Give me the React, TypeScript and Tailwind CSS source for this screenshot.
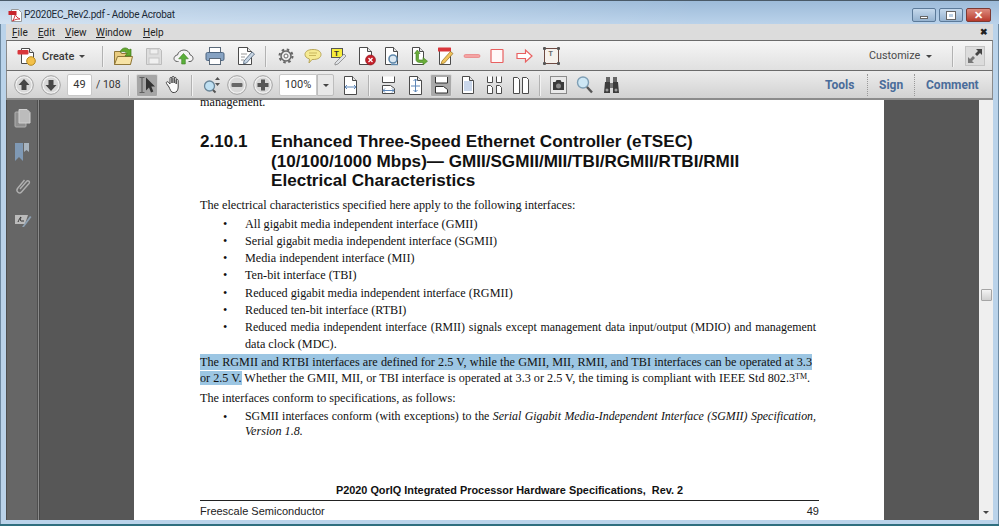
import React from "react";

const INK = "#4b4b4b";
const S = ({ w, h = 20, children }: { w: number; h?: number; children: React.ReactNode }) => (
  <svg width={w} height={h} viewBox={`0 0 ${w} ${h}`} className="shrink-0 block" fill="none">{children}</svg>
);
const Sep = () => <div className="w-[2px] h-[21px] bg-[#b2b2b2] border-r border-[#f2f2f2] shrink-0" />;
const Caret = ({ className = "" }: { className?: string }) => (
  <svg width="6" height="3" className={`shrink-0 ${className}`}><path d="M0 0h6L3 3z" fill="#444" /></svg>
);

const CircleBtn = ({ kind }: { kind: "up" | "down" | "minus" | "plus" }) => (
  <S w={20}>
    <circle cx="10" cy="10" r="9.300" fill="#f0f0f0" stroke="#a0a0a0" />
    <circle cx="10" cy="10" r="7.500" fill="#d8d8d8" />
    {kind === "up" && <path d="M10 4l5.500 6H12.500v5h-5v-5H4.500z" fill="#474747" />}
    {kind === "down" && <path d="M10 16l5.500-6H12.500V5h-5v5H4.500z" fill="#474747" />}
    {kind === "minus" && <rect x="4.500" y="8" width="11" height="4" rx="1" fill="#666" />}
    {kind === "plus" && <path d="M8 4.500h4V8h3.500v4H12v3.500H8V12H4.500V8H8z" fill="#555" />}
  </S>
);

const Bullet = ({ children, h = 17, className = "" }: { children: React.ReactNode; h?: number; className?: string }) => (
  <div className={`flex ${className}`} style={{ height: h }}>
    <div className="w-[45px] shrink-0 pl-[23px]">•</div>
    <div className="flex-1 min-w-0 pr-[3px]">{children}</div>
  </div>
);

const Page = ({ w = 15 }: { w?: number }) => (
  <>
    <path d={`M1.500 1.500h${w - 7}l4 4v${14}h-${w - 3}z`} fill="#fff" stroke={INK} />
    <path d={`M${w - 5.500} 1.500v4h4`} fill="#e4e4e4" stroke={INK} />
  </>
);

const Blue = "#5c86b8";

export default function App() {
  return (
    <div className="w-[999px] h-[526px] overflow-hidden relative bg-[#bad3ea] shadow-[inset_1px_0_0_#6f8ba3,inset_-1px_0_0_#6f8ba3] flex flex-col font-['Liberation_Sans',sans-serif] text-black">
      {/* title bar */}
      <div className="h-[24px] shrink-0 flex items-center pt-[5px] border-t border-[#4a5a68] bg-[linear-gradient(90deg,rgba(255,255,255,0.35),rgba(255,255,255,0)_70%),linear-gradient(180deg,#9dbbd9,#bad2ea)] pl-[8px] pr-[8px]">
        <svg width="15" height="15" viewBox="0 0 15 15" className="shrink-0">
          <path d="M3.500 1.500h7l3 3v9h-10z" fill="#fff" stroke="#999" />
          <rect x="0.500" y="3" width="8" height="4" fill="#c8252c" />
          <path d="M4.500 13c2-3 2.500-5 2.500-7 1 2.500 2.500 4 5 5-3 0-5 .5-7.500 2z" fill="none" stroke="#c8252c" strokeWidth=".9" />
        </svg>
        <span className="ml-[1px] text-[10px] tracking-[-0.25px] leading-none font-['Roboto',sans-serif] text-[#1c2a36]">P2020EC_Rev2.pdf - Adobe Acrobat</span>
        <div className="flex-1" />
        <div className="flex gap-[3px]">
          <div className="w-[24px] h-[14px] rounded-[2px] border border-[#5c7a99] bg-gradient-to-b from-[#c6d9ec] to-[#96b3d0] flex items-end justify-center pb-[2px]">
            <div className="w-[8px] h-[3px] bg-white border border-[#666]" />
          </div>
          <div className="w-[24px] h-[14px] rounded-[2px] border border-[#5c7a99] bg-gradient-to-b from-[#c6d9ec] to-[#96b3d0] flex items-center justify-center">
            <div className="w-[8px] h-[7px] bg-[#bcd0e4] border-2 border-white outline outline-1 outline-[#666]" />
          </div>
          <div className="w-[25px] h-[14px] rounded-[2px] border border-[#7d3a33] bg-gradient-to-b from-[#dc8a7e] to-[#b8392c] flex items-center justify-center text-white text-[11px] font-bold leading-none">✕</div>
        </div>
      </div>
      {/* menu bar */}
      <div className="h-[16px] mx-[6px] shrink-0 bg-[#dcdcdc] flex items-center font-['Roboto',sans-serif] text-[10px] text-[#222] pl-[6px] relative">
        <span className="w-[26px]"><u>F</u>ile</span>
        <span className="w-[27px]"><u>E</u>dit</span>
        <span className="w-[31px]"><u>V</u>iew</span>
        <span className="w-[47px]"><u>W</u>indow</span>
        <span><u>H</u>elp</span>
        <span className="absolute right-[5px] top-[1px] text-[9px] font-bold leading-[14px]">✖</span>
      </div>
      {/* toolbar 1 */}
      <div className="h-[30px] mx-[6px] shrink-0 border-t border-t-[#6b6b6b] border-x border-x-[#8b8b8b] bg-gradient-to-b from-[#f6f6f6] to-[#e0e0e0] flex items-center pl-[10px] pt-[1px]">
        <S w={20}>
          <path d="M4.500 2.500h8l4 4v11h-12z" fill="#fff" stroke={INK} />
          <path d="M12.500 2.500v4h4" fill="#e8e8e8" stroke={INK} />
          <rect x="0.500" y="4" width="11" height="4.500" rx="1" fill="#d9363b" />
          <circle cx="14" cy="15" r="4.300" fill="#f3c04a" stroke="#b5891f" />
        </S>
        <span className="ml-[5px] w-[31px] text-[11px] font-['Roboto',sans-serif] font-medium text-[#3a3a3a] leading-none whitespace-nowrap">Create</span>
        <Caret className="ml-[6px]" />
        <div className="ml-[17px]"><Sep /></div>
        <div className="ml-[9px]">
          <S w={21} h={22}>
            <path d="M1.500 6.500h6l1 2h9v11h-16z" fill="#e9cc80" stroke="#8f7638" />
            <path d="M1.500 19.500l3-8h15l-2 8z" fill="#f7e3a5" stroke="#8f7638" />
            <path d="M7 7c2-5 7-5 9-2l2-1v7h-6l2-2.500c-1-2-4-2.500-7-1.500z" fill="#63a82d" stroke="#3d7a17" strokeWidth=".7" />
          </S>
        </div>
        <div className="ml-[11px]">
          <S w={18}>
            <path d="M1.500 2.500h13l2 2v14h-15z" fill="#dedede" stroke="#bcbcbc" />
            <rect x="5" y="3" width="8" height="5" fill="#efefef" stroke="#c6c6c6" />
            <rect x="4" y="12" width="10" height="6" fill="#f0f0f0" stroke="#c6c6c6" />
          </S>
        </div>
        <div className="ml-[10px]">
          <S w={21}>
            <path d="M5.500 15.500h-1C2 15.500 1 14 1 12.500S2.500 9 4.500 9C5 6 8 4 11 4s5.500 2 6 4.800c1.800.3 3 2 3 3.700s-1.500 3-3 3h-1.500" fill="#f4f4f4" stroke="#5c5c5c" />
            <path d="M10.500 7.500l4.800 5.300h-3V18H8.700v-5.200h-3z" fill="#5aaf3a" stroke="#3c7d22" strokeWidth=".6" />
          </S>
        </div>
        <div className="ml-[11px]">
          <S w={20}>
            <rect x="4.500" y="1.500" width="11" height="5" fill="#fff" stroke="#5b6a7a" />
            <rect x="1" y="6.500" width="18" height="8" rx="1.500" fill="#86a2c2" stroke="#4d6580" />
            <rect x="4.500" y="12.500" width="11" height="6" fill="#fff" stroke="#5b6a7a" />
          </S>
        </div>
        <div className="ml-[12px]">
          <S w={19}>
            <path d="M1.500 1.500h9l4 4v13h-13z" fill="#fff" stroke={INK} />
            <path d="M10.500 1.500v4h4" fill="#e4e4e4" stroke={INK} />
            <path d="M4 8h6M4 11h4M4 14h3" stroke="#999" />
            <path d="M7 15l8-9 2.500 2-8 9-3 .8z" fill="#c7d5e3" stroke="#4f6379" strokeWidth=".8" />
          </S>
        </div>
        <div className="ml-[9px]"><Sep /></div>
        <div className="ml-[11px]">
          <S w={16}>
            <circle cx="8" cy="10" r="5" fill="#e9e9e9" stroke="#666" strokeWidth="1.500" />
            <circle cx="8" cy="10" r="6.500" fill="none" stroke="#666" strokeWidth="2" strokeDasharray="2.500 2.600" />
            <circle cx="8" cy="10" r="2" fill="#fafafa" stroke="#666" />
          </S>
        </div>
        <div className="ml-[10px]">
          <S w={18}>
            <path d="M9 3.500c5 0 8 2 8 5s-3 5-8 5H8l-3 3.500.5-4C2.500 12 1 10.500 1 8.500c0-3 3-5 8-5z" fill="#f6ea92" stroke="#b9a75a" />
            <path d="M5 7h8M5 9.500h7" stroke="#c9b75e" />
          </S>
        </div>
        <div className="ml-[9px]">
          <S w={16}>
            <rect x="0.500" y="2.500" width="11" height="9" fill="#f7ee3b" stroke="#555" />
            <text x="3" y="10" fontSize="8" fontWeight="700" fill="#333" fontFamily="Liberation Sans">T</text>
            <path d="M4 17l9-9 2 2-8 8-3 1z" fill="#dfe2e6" stroke="#777" strokeWidth=".7" />
          </S>
        </div>
        <div className="ml-[11px]">
          <S w={18}>
            <path d="M1.500 1.500h8l4 4v13h-12z" fill="#fff" stroke={INK} />
            <path d="M9.500 1.500v4h4" fill="#e4e4e4" stroke={INK} />
            <circle cx="12.500" cy="14" r="5" fill="#c4202a" stroke="#8c1a20" strokeWidth=".6" />
            <path d="M10.500 12l4 4m0-4l-4 4" stroke="#fff" strokeWidth="1.300" />
          </S>
        </div>
        <div className="ml-[8px]">
          <S w={16}>
            <path d="M1.500 1.500h8l4 4v13h-12z" fill="#fff" stroke={INK} />
            <path d="M9.500 1.500v4h4" fill="#e4e4e4" stroke={INK} />
            <circle cx="9" cy="13" r="4" fill="#dbe8f2" stroke="#5f88ab" strokeWidth="1.600" />
            <path d="M7 18.500h7" stroke="#5f88ab" strokeWidth="1.400" />
          </S>
        </div>
        <div className="ml-[11px]">
          <S w={17}>
            <path d="M1.500 1.500h7l4 4v13h-11z" fill="#fff" stroke={INK} />
            <path d="M8.500 1.500v4h4" fill="#e4e4e4" stroke={INK} />
            <path d="M5 7.500v6c0 2 1.500 3 4 3h3V19l4.500-3.800L12 11.500V14H9c-.800 0-1.500-.500-1.500-1.500v-5H9L6.300 4 3.500 7.500z" fill="#6aad39" stroke="#3e7d20" strokeWidth=".6" />
          </S>
        </div>
        <div className="ml-[9px]">
          <S w={17}>
            <path d="M2.500 2.500h11v16h-11z" fill="#fff" stroke={INK} />
            <rect x="1" y="1.500" width="13" height="4" rx=".5" fill="#d9363b" />
            <path d="M5 15l8.500-9.500 2.500 2-8.500 9.500-3.500 1z" fill="#f2c45c" stroke="#8f6d20" strokeWidth=".7" />
          </S>
        </div>
        <div className="ml-[9px]">
          <S w={18}>
            <rect x="1" y="8.500" width="16" height="3" rx="1.500" fill="#f4a3a3" stroke="#e86f6f" strokeWidth=".6" />
          </S>
        </div>
        <div className="ml-[9px]">
          <S w={14}>
            <rect x="1" y="3.500" width="12" height="13" rx=".5" fill="#fff8f8" stroke="#e86060" strokeWidth="1.200" />
          </S>
        </div>
        <div className="ml-[12px]">
          <S w={17}>
            <path d="M1 7.500h8.500V4l6.500 6-6.500 6v-3.500H1z" fill="#fff" stroke="#e86060" strokeWidth="1.200" />
          </S>
        </div>
        <div className="ml-[10px]">
          <S w={17}>
            <rect x="1.500" y="2.500" width="14" height="15" fill="#f6f1ec" stroke="#6e4a42" />
            <rect x="0" y="1" width="3" height="3" rx="1" fill="#555" />
            <rect x="14" y="1" width="3" height="3" rx="1" fill="#555" />
            <rect x="0" y="16" width="3" height="3" rx="1" fill="#555" />
            <rect x="14" y="16" width="3" height="3" rx="1" fill="#555" />
            <text x="5.500" y="10" fontSize="7" fontWeight="700" fill="#666" fontFamily="Liberation Sans">T</text>
          </S>
        </div>
        <div className="flex-1" />
        <span className="w-[48px] text-[10.800px] font-['Roboto',sans-serif] text-[#4a4a4a] leading-none whitespace-nowrap">Customize</span>
        <Caret className="ml-[9px]" />
        <div className="ml-[20px]"><Sep /></div>
        <div className="ml-[11px] mr-[7px] w-[20px] h-[20px] bg-[#dcdcdc] border border-[#c4c4c4] shrink-0">
          <svg width="18" height="18" viewBox="0 0 18 18" className="block">
            <path d="M10 2h6v6l-2-2-3 3-2-2 3-3z" fill="#444" />
            <path d="M8 16H2v-6l2 2 3-3 2 2-3 3z" fill="#777" />
          </svg>
        </div>
      </div>
      {/* toolbar 2 */}
      <div className="h-[30px] mx-[6px] shrink-0 border-t border-t-[#6b6b6b] border-x border-x-[#8b8b8b] bg-gradient-to-b from-[#ececec] to-[#d2d2d2] flex items-center pl-[7px] pt-[1px] border-b-[2px] border-b-[#8c8c8c]">
        <CircleBtn kind="up" />
        <div className="ml-[7px]"><CircleBtn kind="down" /></div>
        <div className="ml-[6px] w-[25px] h-[22px] bg-white border border-[#c8c8c8] rounded-[2px] flex items-center justify-center text-[11px] font-['Roboto',sans-serif] text-[#333] shrink-0">49</div>
        <span className="ml-[4px] w-[24px] text-[10.500px] font-['Roboto',sans-serif] text-[#333] leading-none whitespace-nowrap">/ 108</span>
        <div className="ml-[8px]"><Sep /></div>
        <div className="ml-[6px] w-[22px] h-[23px] bg-[#a6a6a6] border border-[#d9d9d9] rounded-[2px] flex items-center justify-center shrink-0">
          <svg width="18" height="18" viewBox="0 0 18 18" className="block">
            <path d="M1.500 1.500h5M1.500 16.500h5M4 1.500v15" stroke="#5f5f5f" strokeWidth="1.200" />
            <path d="M8 1.500v13l3-3 2 5 2.300-1-2-5H17z" fill="#333" />
          </svg>
        </div>
        <div className="ml-[7px]">
          <S w={17}>
            <path d="M4 12L1.500 8.500c-.8-1.500 1-2.500 2-1.200L5 9V3.500c0-1.500 2-1.500 2 0V8V2.500c0-1.500 2.200-1.500 2.200 0V8V3.500c0-1.500 2-1.500 2 0V9V5.500c0-1.400 2-1.400 2 0V12c0 3-1.500 5.500-4 5.500H8C6 17.500 5 14 4 12z" fill="#fbfbfb" stroke="#444" />
          </S>
        </div>
        <div className="ml-[9px]"><Sep /></div>
        <div className="ml-[9px]">
          <S w={19}>
            <circle cx="7.500" cy="11" r="5" fill="#bfe0f2" stroke="#6a8699" strokeWidth="1.300" />
            <path d="M11 15l2.500 2.500" stroke="#555" strokeWidth="2" />
            <path d="M15.500 2l2.500 3h-5zM15.500 11l2.500-3h-5z" fill="#555" />
          </S>
        </div>
        <div className="ml-[6px]"><CircleBtn kind="minus" /></div>
        <div className="ml-[6px]"><CircleBtn kind="plus" /></div>
        <div className="ml-[6px] w-[38px] h-[22px] bg-white border border-[#c8c8c8] rounded-l-[2px] flex items-center justify-center text-[11px] font-['Roboto',sans-serif] text-[#333] shrink-0">100%</div>
        <div className="w-[17px] h-[22px] bg-[#e8e8e8] border border-[#bdbdbd] rounded-r-[2px] flex items-center justify-center shrink-0">
          <Caret />
        </div>
        <div className="ml-[9px]">
          <S w={15} h={20}>
            <Page />
            <path d="M2 12h11M2 12l2-2m-2 2l2 2M13 12l-2-2m2 2l-2 2" stroke={Blue} />
          </S>
        </div>
        <div className="ml-[10px]"><Sep /></div>
        <div className="ml-[11px]">
          <S w={15} h={20}>
            <path d="M1.500 1.500v6h12v-6M1.500 10.500h8l4 3v5h-12z" fill="#fff" stroke={INK} />
            <path d="M2 15.500h11M2 15.500l2-2m-2 2l2 2M13 15.500l-2-2m2 2l-2 2" stroke={Blue} />
          </S>
        </div>
        <div className="ml-[12px]">
          <S w={15} h={20}>
            <Page />
            <path d="M7.500 4v13M3 11h9M7.500 4l-2 2m2-2l2 2M7.500 17l-2-2m2 2l2-2" stroke={Blue} />
          </S>
        </div>
        <div className="ml-[7px] w-[22px] h-[23px] bg-[#a9a9a9] border border-[#dcdcdc] rounded-[2px] flex items-center justify-center shrink-0">
          <svg width="15" height="18" viewBox="0 0 15 18" className="block">
            <path d="M1.500 1v6h12V1M1.500 10.500h8l4 3V17h-12z" fill="#fff" stroke="#333" />
          </svg>
        </div>
        <div className="ml-[9px]">
          <S w={14} h={20}>
            <path d="M1.500 1.500h7l4 4v13h-11z" fill="#fff" stroke={INK} />
            <path d="M8.500 1.500v4h4" fill="#e4e4e4" stroke={INK} />
            <path d="M3 7h8M3 9h8M3 11h8M3 13h8M3 15h8" stroke="#94aed6" />
          </S>
        </div>
        <div className="ml-[11px]">
          <S w={17} h={20}>
            <path d="M1.500 1.500v6h5v-6M10.500 1.500v6h5v-6M1.500 10.500h3l2 2v6h-5zM10.500 10.500h3l2 2v6h-5z" fill="#fff" stroke={INK} />
          </S>
        </div>
        <div className="ml-[9px]">
          <S w={18} h={20}>
            <path d="M1.500 2.500h4l2 2v14h-6zM10.500 2.500h4l2 2v14h-6z" fill="#fff" stroke={INK} />
          </S>
        </div>
        <div className="ml-[9px]"><Sep /></div>
        <div className="ml-[9px]">
          <S w={17}>
            <rect x="0.500" y="1.500" width="16" height="17" fill="#e9e9e9" stroke="#333" strokeDasharray="1 1" />
            <path d="M3 7h2.500l1-2h4l1 2H14v8H3z" fill="#3a3a3a" />
            <circle cx="8.500" cy="11" r="2.500" fill="#8a8a8a" />
          </S>
        </div>
        <div className="ml-[9px]">
          <S w={17}>
            <circle cx="7" cy="7.500" r="5.500" fill="#cde7f5" stroke="#7f9fb5" strokeWidth="1.400" />
            <path d="M11 12l5 5.500" stroke="#555" strokeWidth="2.400" />
          </S>
        </div>
        <div className="ml-[10px]">
          <S w={17}>
            <rect x="3" y="2" width="4" height="5" fill="#666" />
            <rect x="10" y="2" width="4" height="5" fill="#666" />
            <path d="M2 7h5v11H1zM10 7h5l1 11h-6z" fill="#3c3c3c" />
            <rect x="7" y="8" width="3" height="5" fill="#777" />
            <circle cx="4" cy="15" r="1.500" fill="#999" /><circle cx="13" cy="15" r="1.500" fill="#999" />
          </S>
        </div>
        <div className="flex-1" />
        <span className="w-[30px] text-[12px] font-['Roboto',sans-serif] font-bold text-[#4a6c9a] leading-none whitespace-nowrap">Tools</span>
        <div className="ml-[12px] h-[22px] border-l border-dotted border-[#999]" />
        <span className="ml-[11px] w-[23px] text-[12px] font-['Roboto',sans-serif] font-bold text-[#4a6c9a] leading-none whitespace-nowrap">Sign</span>
        <div className="ml-[12px] h-[22px] border-l border-dotted border-[#999]" />
        <span className="ml-[11px] mr-[11px] w-[55px] text-[12px] font-['Roboto',sans-serif] font-bold text-[#4a6c9a] leading-none whitespace-nowrap">Comment</span>
      </div>
      {/* body */}
      <div className="h-[420px] shrink-0 mx-[6px] flex bg-[#575757] overflow-hidden">
        <div className="w-[32px] shrink-0 bg-[#666666] border-x border-x-[#4e4e4e] flex flex-col pl-[7px] pt-[8px]">
          <svg width="18" height="20" viewBox="0 0 18 20" className="block">
            <rect x="1" y="4" width="11" height="15" rx="1" fill="#8f8f8f" stroke="#b0b0b0" />
            <path d="M5 1.500h8l3 3V15H5z" fill="#bcbcbc" stroke="#d0d0d0" />
          </svg>
          <svg width="16" height="18" viewBox="0 0 16 18" className="block mt-[15px]">
            <path d="M1 0h8v18l-4-4-4 4z" fill="#7f99b5" />
            <path d="M10 0h5v9l-2.500-2L10 9z" fill="#a8b4bf" />
          </svg>
          <svg width="18" height="18" viewBox="0 0 18 18" className="block mt-[16px]">
            <path d="M6 12l6.500-7.500c1.500-1.800 4 .2 2.500 2L7.500 15c-2 2.300-6 -.5-4-3.500L10.500 3" fill="none" stroke="#b0b0b0" strokeWidth="1.400" />
          </svg>
          <svg width="18" height="14" viewBox="0 0 18 14" className="block mt-[19px]">
            <path d="M1 1h13l-3 9H1z" fill="#bbb" />
            <path d="M4 8c1-2 2-5 3-5-.500 2-1 4 0 4h3" stroke="#333" fill="none" />
            <path d="M8 13l8-11 1.500 1-7.500 10z" fill="#8da0b2" />
          </svg>
        </div>
        <div className="w-[2px] shrink-0 bg-[#8a8a8a] border-r border-[#474747]" />
        <div className="flex-1 min-w-0 pl-[94px]">
          <div className="w-[750px] h-full bg-white overflow-hidden font-['Liberation_Serif',serif] text-[12.200px] leading-[17px] text-[#111] pl-[66px] pr-[65px]">
            <div className="mt-[-6px] h-[17px]">management.</div>
            <div className="mt-[21px] flex font-['Liberation_Sans',sans-serif] font-bold text-[17.100px] leading-[19.500px] h-[59px] whitespace-nowrap">
              <div className="w-[71px]">2.10.1</div>
              <div>
                Enhanced Three-Speed Ethernet Controller (eTSEC)<br />
                (10/100/1000 Mbps)— GMII/SGMII/MII/TBI/RGMII/RTBI/RMII<br />
                Electrical Characteristics
              </div>
            </div>
            <div className="mt-[6px] h-[19px]">The electrical characteristics specified here apply to the following interfaces:</div>
            <Bullet>All gigabit media independent interface (GMII)</Bullet>
            <Bullet>Serial gigabit media independent interface (SGMII)</Bullet>
            <Bullet>Media independent interface (MII)</Bullet>
            <Bullet>Ten-bit interface (TBI)</Bullet>
            <Bullet className="mt-[1px]">Reduced gigabit media independent interface (RGMII)</Bullet>
            <Bullet>Reduced ten-bit interface (RTBI)</Bullet>
            <Bullet h={34}>
              <div className="h-[17px] text-[11.900px] [text-align-last:justify]">Reduced media independent interface (RMII) signals except management data input/output (MDIO) and management</div>
              <div>data clock (MDC).</div>
            </Bullet>
            <div className="h-[16px] mt-[1px] w-[612px] [text-align-last:justify] whitespace-nowrap bg-[#9cc6e3]">
              The RGMII and RTBI interfaces are defined for 2.5 V, while the GMII, MII, RMII, and TBI interfaces can be operated at 3.3
            </div>
            <div className="h-[20px] whitespace-nowrap">
              <span className="bg-[#9cc6e3]">or 2.5 V.</span> Whether the GMII, MII, or TBI interface is operated at 3.3 or 2.5 V, the timing is compliant with IEEE Std 802.3<span className="text-[8px] align-top leading-[14px]">TM</span>.
            </div>
            <div className="h-[19px]">The interfaces conform to specifications, as follows:</div>
            <Bullet h={32}>
              <div className="h-[15px] text-[11.900px] leading-[15px] [text-align-last:justify]">SGMII interfaces conform (with exceptions) to the <i>Serial Gigabit Media-Independent Interface (SGMII) Specification,</i></div>
              <div className="leading-[15px]"><i>Version 1.8.</i></div>
            </Bullet>
            <div className="mt-[42px] h-[15px] text-center font-['Liberation_Sans',sans-serif] font-bold text-[10.900px] leading-[15px] whitespace-nowrap">P2020 QorIQ Integrated Processor Hardware Specifications,&nbsp; Rev. 2</div>
            <div className="mt-[2px] pt-[2px] border-t border-[#222] flex justify-between font-['Liberation_Sans',sans-serif] text-[11px] leading-[17px] text-[#222]">
              <span>Freescale Semiconductor</span><span>49</span>
            </div>
          </div>
        </div>
        <div className="w-[14px] shrink-0 bg-[#efefef] flex flex-col items-center relative">
          <div className="absolute top-[189px] left-[2px] w-[11px] h-[12px] bg-gradient-to-b from-[#f4f4f4] to-[#d0d0d0] border border-[#a5a5a5] rounded-[1px]" />
          <div className="flex-1" />
          <Caret className="mb-[6px]" />
        </div>
      </div>
      <div className="h-[4px] shrink-0" />
      <div className="h-[2px] shrink-0 bg-[#2f6f7f]" />
    </div>
  );
}
